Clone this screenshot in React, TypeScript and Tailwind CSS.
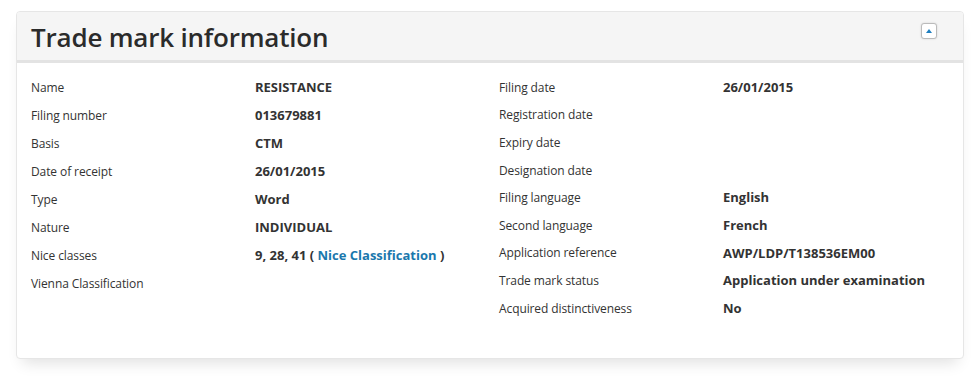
const left: [string, React.ReactNode][] = [
  ['Name', 'RESISTANCE'],
  ['Filing number', '013679881'],
  ['Basis', 'CTM'],
  ['Date of receipt', '26/01/2015'],
  ['Type', 'Word'],
  ['Nature', 'INDIVIDUAL'],
  [
    'Nice classes',
    <>
      9, 28, 41 ( <a className="text-[#1a78ad]">Nice Classification</a> )
    </>,
  ],
  ['Vienna Classification', ''],
];

const right: [string, string][] = [
  ['Filing date', '26/01/2015'],
  ['Registration date', ''],
  ['Expiry date', ''],
  ['Designation date', ''],
  ['Filing language', 'English'],
  ['Second language', 'French'],
  ['Application reference', 'AWP/LDP/T138536EM00'],
  ['Trade mark status', 'Application under examination'],
  ['Acquired distinctiveness', 'No'],
];

function Row({ label, value, h }: { label: string; value: React.ReactNode; h: string }) {
  return (
    <div className={`flex items-center ${h}`}>
      <div className="w-[224px] shrink-0 text-[12px] tracking-[-0.1px]">{label}</div>
      <div className="font-bold text-[13px]">{value}</div>
    </div>
  );
}

export default function App() {
  return (
    <div className="w-[973px] h-[379px] bg-white pt-[11px] pl-[16px] font-['Open_Sans',sans-serif] text-[#333]">
      <div className="w-[948px] h-[348px] rounded-[4px] border border-[#e6e6e6] bg-white shadow-[0_10px_14px_-6px_rgba(0,0,0,0.12)] overflow-hidden">
        <div className="flex items-center justify-between h-[51px] bg-[#f5f5f5] border-b-[3px] border-[#e3e3e3] pl-[14px] pr-[26px]">
          <h2 className="text-[26px] font-semibold text-[#2b2b2b] tracking-[-0.2px] leading-none mt-[2px]">
            Trade mark information
          </h2>
          <button className="w-[16px] h-[16px] mt-[-10px] rounded-[3px] border border-[#bbb] bg-white flex items-center justify-center shadow-[0_0_2px_rgba(0,0,0,0.15)]">
            <svg width="6" height="4" viewBox="0 0 6 4">
              <path d="M0 4 L3 0 L6 4 Z" fill="#1f7fc0" />
            </svg>
          </button>
        </div>
        <div className="flex pl-[14px] pt-[11px]">
          <div className="w-[468px]">
            {left.map(([l, v]) => (
              <Row key={l} label={l} value={v} h="h-[28px]" />
            ))}
          </div>
          <div className="w-[460px]">
            {right.map(([l, v]) => (
              <Row key={l} label={l} value={v} h="h-[27.6px]" />
            ))}
          </div>
        </div>
      </div>
    </div>
  );
}
